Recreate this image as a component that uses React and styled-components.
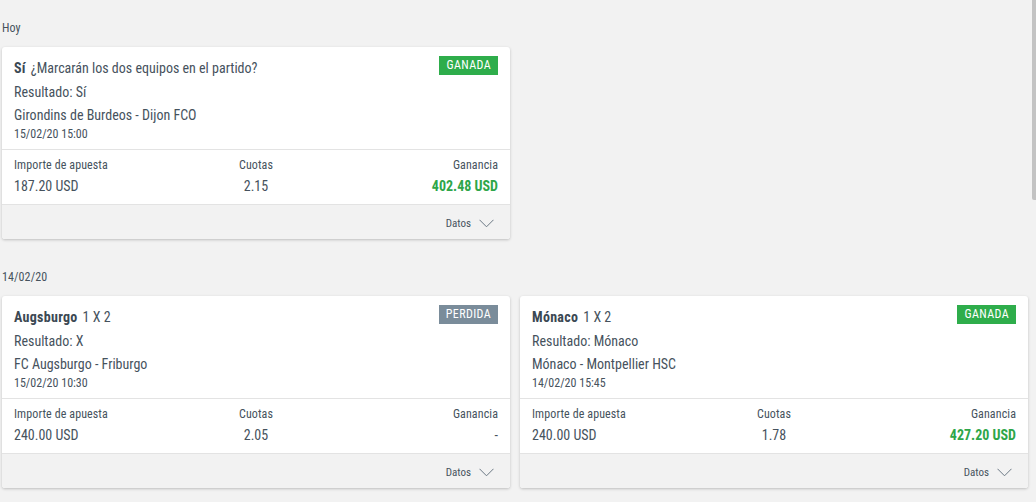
import React from "react";
import styled, { createGlobalStyle } from "styled-components";

const Global = createGlobalStyle`
  html, body { margin: 0; padding: 0; background: #f2f2f2; }
  body {
    font-family: "Roboto Condensed", "Liberation Sans Narrow", Roboto, "Liberation Sans", sans-serif;
    color: #46525d;
    overflow: hidden;
  }
  * { box-sizing: border-box; }
`;

const Page = styled.div`
  position: relative;
  width: 1036px;
  height: 502px;
  padding: 20px 8px 0 2px;
`;

const Scrollbar = styled.div`
  position: absolute;
  top: 0;
  right: 0;
  width: 4px;
  height: 200px;
  background: #c3c3c3;
  border-bottom-left-radius: 2px;
`;

const Section = styled.section`
  & + & { margin-top: 30px; }
`;

const SectionTitle = styled.div`
  font-size: 12px;
  line-height: 16px;
  letter-spacing: 0.1px;
  margin-bottom: 11px;
`;

const Grid = styled.div`
  display: grid;
  grid-template-columns: 508px 508px;
  column-gap: 10px;
  align-items: start;
`;

const Card = styled.article`
  background: #fff;
  border-radius: 3px;
  box-shadow: 0 1px 3px rgba(0, 0, 0, 0.22);
  overflow: hidden;
`;

const Head = styled.div`
  position: relative;
  padding: 9px 12px 8px 12px;
  border-bottom: 1px solid #e3e3e3;
`;

const TitleLine = styled.div`
  font-size: 14px;
  line-height: 24px;
  padding-right: 80px;
`;

const Strong = styled.b`
  font-weight: 700;
  color: #3b4853;
  letter-spacing: 0.3px;
  margin-right: 5px;
`;

const InfoLine = styled.div`
  font-size: 14px;
  line-height: ${(p) => p.$lh || 24}px;
`;

const DateLine = styled.div`
  font-size: 12px;
  line-height: 14px;
`;

const Badge = styled.span`
  position: absolute;
  top: 9px;
  right: 12px;
  height: 19px;
  padding: 0 7px;
  font-size: 12px;
  line-height: 19px;
  letter-spacing: 0.4px;
  color: #fff;
  background: ${(p) => (p.$won ? "#2ead4b" : "#7a8c9a")};
`;

const Stats = styled.div`
  display: grid;
  grid-template-columns: 1fr 1fr 1fr;
  padding: 7px 12px 8px 12px;
  border-bottom: 1px solid #e3e3e3;
`;

const StatCol = styled.div`
  display: flex;
  flex-direction: column;
  gap: 3px;
  align-items: ${(p) => p.$align};
`;

const StatLabel = styled.div`
  font-size: 12px;
  line-height: 16px;
  letter-spacing: 0.1px;
`;

const StatValue = styled.div`
  font-size: 14px;
  line-height: 20px;
  font-weight: ${(p) => (p.$win ? 700 : 400)};
  color: ${(p) => (p.$win ? "#2ea649" : "#46525d")};
`;

const Foot = styled.div`
  display: flex;
  justify-content: flex-end;
  align-items: center;
  gap: 8px;
  height: 34px;
  padding: 2px 16px 0 0;
  background: #f2f2f2;
  font-size: 11px;
`;

const Chevron = () => (
  <svg width="15" height="9" viewBox="0 0 15 9" fill="none">
    <path d="M0.5 0.8 L7.5 7.8 L14.5 0.8" stroke="#6b7884" strokeWidth="1" />
  </svg>
);

const BetCard = ({ pick, market, result, teams, date, stake, odds, win, won }) => (
  <Card>
    <Head>
      <TitleLine>
        <Strong>{pick}</Strong>
        {market}
      </TitleLine>
      <InfoLine>Resultado: {result}</InfoLine>
      <InfoLine $lh={23}>{teams}</InfoLine>
      <DateLine>{date}</DateLine>
      <Badge $won={won}>{won ? "GANADA" : "PERDIDA"}</Badge>
    </Head>
    <Stats>
      <StatCol $align="flex-start">
        <StatLabel>Importe de apuesta</StatLabel>
        <StatValue>{stake}</StatValue>
      </StatCol>
      <StatCol $align="center">
        <StatLabel>Cuotas</StatLabel>
        <StatValue>{odds}</StatValue>
      </StatCol>
      <StatCol $align="flex-end">
        <StatLabel>Ganancia</StatLabel>
        <StatValue $win={won}>{win}</StatValue>
      </StatCol>
    </Stats>
    <Foot>
      Datos
      <Chevron />
    </Foot>
  </Card>
);

export default function App() {
  return (
    <>
      <Global />
      <Page>
        <Section>
          <SectionTitle>Hoy</SectionTitle>
          <Grid>
            <BetCard
              pick="Sí"
              market="¿Marcarán los dos equipos en el partido?"
              result="Sí"
              teams="Girondins de Burdeos - Dijon FCO"
              date="15/02/20 15:00"
              stake="187.20 USD"
              odds="2.15"
              win="402.48 USD"
              won
            />
          </Grid>
        </Section>
        <Section>
          <SectionTitle>14/02/20</SectionTitle>
          <Grid>
            <BetCard
              pick="Augsburgo"
              market="1 X 2"
              result="X"
              teams="FC Augsburgo - Friburgo"
              date="15/02/20 10:30"
              stake="240.00 USD"
              odds="2.05"
              win="-"
            />
            <BetCard
              pick="Mónaco"
              market="1 X 2"
              result="Mónaco"
              teams="Mónaco - Montpellier HSC"
              date="14/02/20 15:45"
              stake="240.00 USD"
              odds="1.78"
              win="427.20 USD"
              won
            />
          </Grid>
        </Section>
        <Scrollbar />
      </Page>
    </>
  );
}
